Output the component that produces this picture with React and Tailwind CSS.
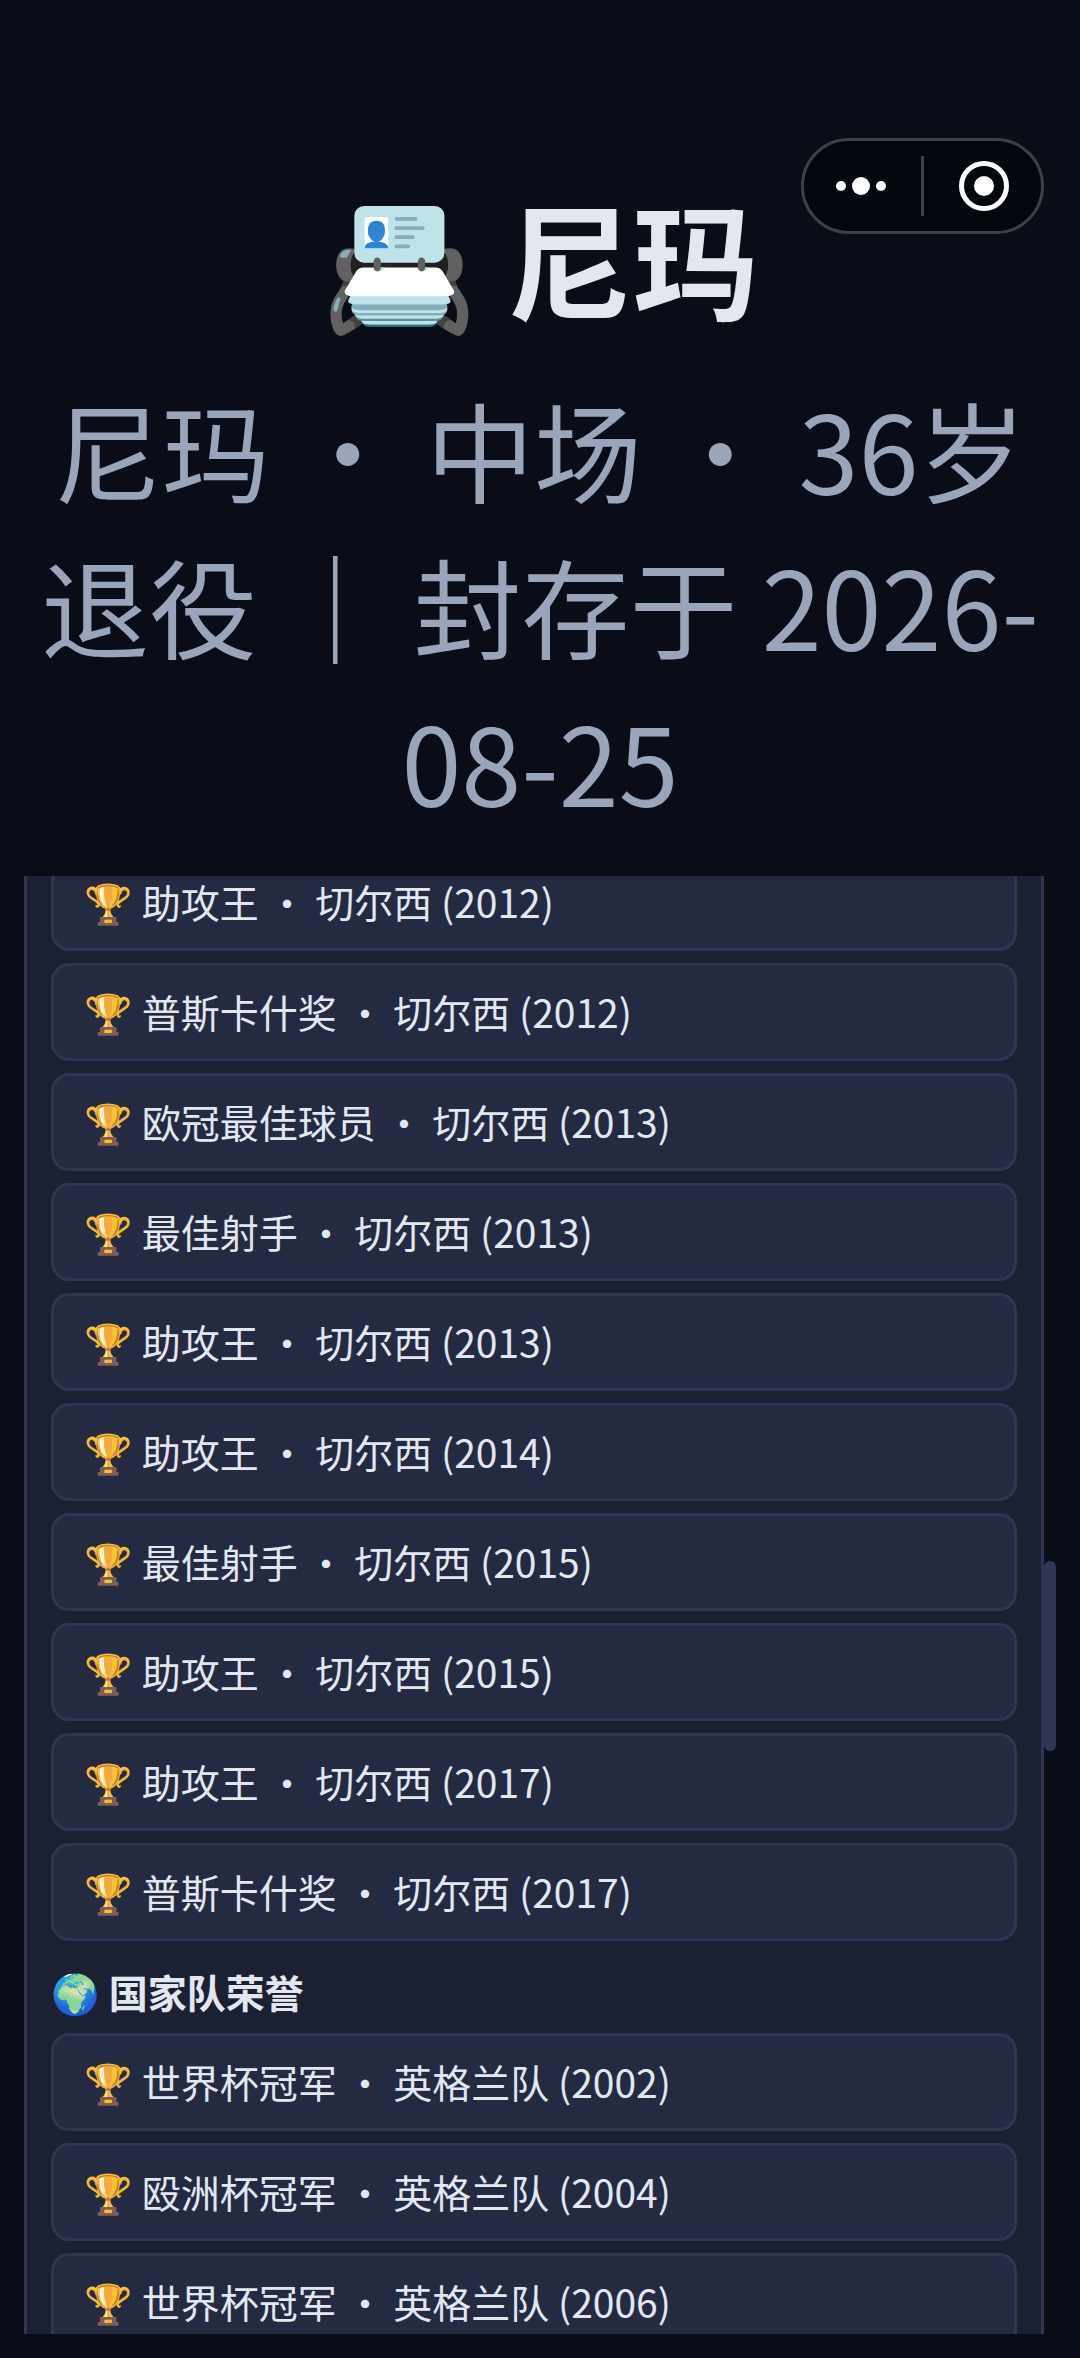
const clubHonours = [
  '助攻王 · 切尔西 (2012)',
  '普斯卡什奖 · 切尔西 (2012)',
  '欧冠最佳球员 · 切尔西 (2013)',
  '最佳射手 · 切尔西 (2013)',
  '助攻王 · 切尔西 (2013)',
  '助攻王 · 切尔西 (2014)',
  '最佳射手 · 切尔西 (2015)',
  '助攻王 · 切尔西 (2015)',
  '助攻王 · 切尔西 (2017)',
  '普斯卡什奖 · 切尔西 (2017)',
];

const nationalHonours = [
  '世界杯冠军 · 英格兰队 (2002)',
  '殴洲杯冠军 · 英格兰队 (2004)',
  '世界杯冠军 · 英格兰队 (2006)',
];

function HonourList({ items }) {
  return (
    <ul className="flex flex-col gap-3">
      {items.map((item) => (
        <li
          key={item}
          className="flex h-[98px] shrink-0 items-center rounded-[18px] border-3 border-[#2f3552] bg-[#252a43] px-[30px] pb-0.5"
        >
          <span>
            <span className="saturate-85">🏆</span> {item}
          </span>
        </li>
      ))}
    </ul>
  );
}

function CapsuleMenu() {
  return (
    <div className="absolute right-9 top-[138px] flex h-24 w-[243px] items-center rounded-full border-3 border-[#3d4048] bg-[#04060d]">
      <button type="button" aria-label="更多" className="flex flex-1 justify-center">
        <svg className="h-5 w-[56px]" viewBox="0 0 56 20" fill="#fff">
          <circle cx="6" cy="10" r="5" />
          <circle cx="26" cy="10" r="9" />
          <circle cx="46" cy="10" r="5" />
        </svg>
      </button>
      <span className="h-[60px] w-[3px] bg-[#3d4048]" />
      <button type="button" aria-label="关闭" className="flex flex-1 justify-center">
        <svg className="h-[50px] w-[52px]" viewBox="0 0 52 50">
          <circle cx="27" cy="25" r="22.5" fill="none" stroke="#fff" strokeWidth="5" />
          <circle cx="27" cy="25" r="10" fill="#fff" />
        </svg>
      </button>
    </div>
  );
}

export default function App() {
  return (
    <div className="relative flex h-screen flex-col bg-[#0a0d17] pb-6 font-['Noto_Sans_CJK_SC',sans-serif] text-[#e2e7f0]">
      <CapsuleMenu />

      <header className="px-9 pb-[38px] pt-[178px] text-center">
        <h1 className="text-[126px] font-bold leading-[156px]">
          <span className="saturate-85">📇</span> 尼玛
        </h1>
        <p className="mt-9 text-[108px] leading-[156px] text-[#9aa4ba]">
          尼玛 · 中场 · 36岁退役 ｜ 封存于 2026-08-25
        </p>
      </header>

      <main className="relative ml-6 mr-9 flex min-h-0 flex-1 flex-col">
        <div className="min-h-0 flex-1 overflow-hidden border-x-3 border-[#2f3552] bg-[#1b2033] px-6 text-[39px] leading-[60px]">
          {/* the list is scrolled a little, so the first card is cut off */}
          <div className="-mt-[23px]">
            <HonourList items={clubHonours} />
            <h2 className="pb-3 pt-5 font-bold">
              <span className="saturate-85">🌍</span> 国家队荣誉
            </h2>
            <HonourList items={nationalHonours} />
          </div>
        </div>
        <span className="absolute -right-3 top-[685px] h-[190px] w-3 rounded-full bg-[#2e3555]" />
      </main>
    </div>
  );
}
